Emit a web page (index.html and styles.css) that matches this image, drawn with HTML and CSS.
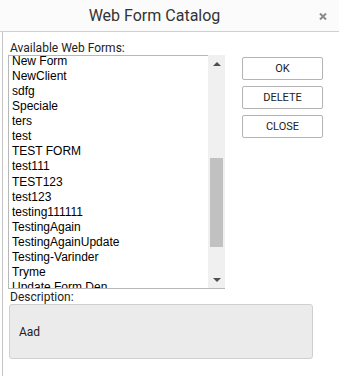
FILE: index.html
```html
<!DOCTYPE html>
<html>
<head>
<meta charset="utf-8">
<link rel="stylesheet" href="styles.css">
</head>
<body>
<div class="dialog">
  <div class="titlebar">
    <div class="title">Web Form Catalog</div>
    <div class="close">
      <svg width="8" height="7" viewBox="0 0 8 7"><path d="M1 0.5 L7 6.5 M7 0.5 L1 6.5" stroke="#8a8a8a" stroke-width="2"/></svg>
    </div>
  </div>
  <div class="body">
    <div class="top">
      <div class="leftcol">
        <div class="label">Available Web Forms:</div>
        <div class="listbox">
          <div class="items">
            <div class="inner">
              <div class="item">New Form</div>
              <div class="item">NewClient</div>
              <div class="item">sdfg</div>
              <div class="item">Speciale</div>
              <div class="item">ters</div>
              <div class="item">test</div>
              <div class="item">TEST FORM</div>
              <div class="item">test111</div>
              <div class="item">TEST123</div>
              <div class="item">test123</div>
              <div class="item">testing111111</div>
              <div class="item">TestingAgain</div>
              <div class="item">TestingAgainUpdate</div>
              <div class="item">Testing-Varinder</div>
              <div class="item">Tryme</div>
              <div class="item">Update Form Den</div>
            </div>
          </div>
          <div class="scrollbar">
            <div class="sbtn"><span class="arrow-up"></span></div>
            <div class="track"><div class="thumb"></div></div>
            <div class="sbtn"><span class="arrow-down"></span></div>
          </div>
        </div>
      </div>
      <div class="buttons">
        <button class="btn">OK</button>
        <button class="btn">DELETE</button>
        <button class="btn">CLOSE</button>
      </div>
    </div>
    <div class="label desc-label">Description:</div>
    <div class="desc">Aad</div>
  </div>
</div>
</body>
</html>
```
FILE: styles.css
```css
* { box-sizing: border-box; }
html, body { margin: 0; padding: 0; background: #fff; }
body { font-family: Roboto, "Liberation Sans", sans-serif; color: #222; }
.dialog { width: 339px; height: 376px; overflow: hidden; }
.titlebar {
  display: flex;
  height: 32px;
  border-bottom: 1px solid #d0d0d0;
  background: #fbfbfb;
}
.title {
  flex: 1;
  text-align: center;
  font-size: 16px;
  line-height: 31px;
  color: #333;
}
.close {
  width: 30px;
  display: flex;
  align-items: center;
  justify-content: center;
  padding-right: 2px;
  padding-top: 1px;
}
.body {
  margin-left: 2px;
  border-left: 1px solid #c4c4c4;
  padding: 9px 0 0 5px;
  height: 344px;
}
.top { display: flex; gap: 17px; }
.leftcol { width: 217px; }
.label { font-size: 12px; line-height: 14px; color: #222; padding-left: 2px; }
.listbox { display: flex; height: 234px; }
.items {
  flex: 1;
  border: 1px solid #b8b8b8;
  border-right: none;
  overflow: hidden;
}
.inner { margin-top: -2px; padding-left: 3px; }
.item {
  font-family: "Liberation Sans", Arial, sans-serif;
  font-size: 12px;
  line-height: 15.07px;
  color: #000;
  white-space: nowrap;
}
.scrollbar {
  width: 17px;
  background: #f0f0f0;
  border-bottom: 1px solid #b8b8b8;
  display: flex;
  flex-direction: column;
}
.sbtn { height: 17px; display: flex; align-items: center; justify-content: center; }
.arrow-up { width: 0; height: 0; border-left: 4px solid transparent; border-right: 4px solid transparent; border-bottom: 4px solid #505050; }
.arrow-down { width: 0; height: 0; border-left: 4px solid transparent; border-right: 4px solid transparent; border-top: 4px solid #505050; }
.track { flex: 1; padding: 86px 2px 0 2px; }
.thumb { height: 89px; background: #c1c1c1; }
.buttons { display: flex; flex-direction: column; gap: 6px; padding-top: 16px; }
.btn {
  width: 81px;
  height: 23px;
  background: #fff;
  border: 1px solid #b4b4b4;
  border-radius: 2px;
  font-family: Roboto, sans-serif;
  font-size: 11px;
  color: #222;
  padding: 0;
}
.desc-label { padding-top: 1px; height: 15px; }
.desc {
  margin-left: 1px;
  width: 304px;
  height: 55px;
  background: #ebebeb;
  border: 1px solid #cfcfcf;
  border-radius: 3px;
  display: flex;
  align-items: center;
  padding-left: 9px;
  font-size: 12px;
  color: #222;
}
```
